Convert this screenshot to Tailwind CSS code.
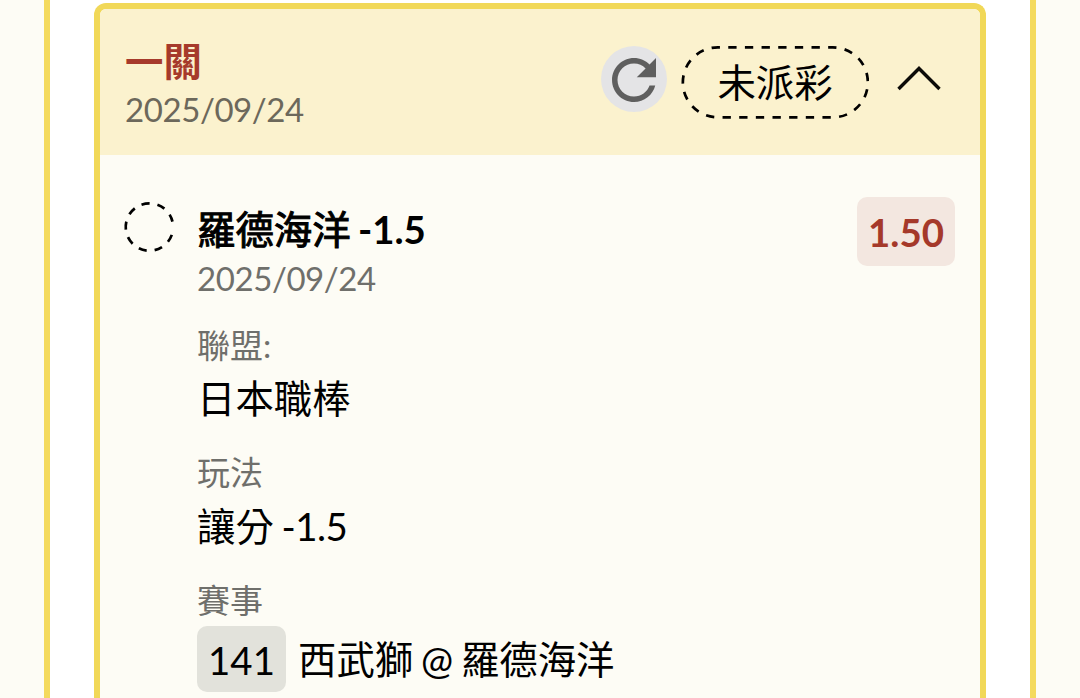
<!DOCTYPE html>
<html lang="zh-TW">
<head>
  <meta charset="UTF-8">
  <meta name="viewport" content="width=device-width, initial-scale=1.0">
  <script src="https://cdn.jsdelivr.net/npm/@tailwindcss/browser@4"></script>
  <title>投注紀錄</title>
</head>
<body class="h-[698px] overflow-hidden bg-[#fdfcf5] font-[Lato,'Noto_Sans_CJK_TC',sans-serif] text-black">
  <div class="ml-[44px] h-[698px] w-[992px] border-x-6 border-[#f4da5e] bg-white px-[44px] pt-[3px]">
    <div class="h-[695px] rounded-t-xl border-6 border-b-0 border-[#f1d858] bg-[#fdfcf5]">

      <header class="flex h-[146px] justify-between rounded-t-md bg-[#fbf2ce] pr-[38px] pl-[25px]">
        <div class="pt-[28px]">
          <h1 class="h-[48px] text-[38.4px] leading-[48px] font-bold text-[#a63a2b]">一關</h1>
          <p class="h-[48px] text-[33px] leading-[48px] tracking-[-0.42px] text-[#6c685b]">2025/09/24</p>
        </div>
        <div class="flex items-start pt-[37px]">
          <button class="size-[66px] rounded-full bg-[#e4e4e6]">
            <svg class="mt-px size-[66px]" viewBox="0 0 24 24" fill="#5f5f5f">
              <path d="M17.65 6.35C16.2 4.9 14.21 4 12 4c-4.42 0-7.99 3.58-7.99 8s3.57 8 7.99 8c3.73 0 6.84-2.55 7.73-6h-2.08c-.82 2.33-3.04 4-5.65 4-3.31 0-6-2.69-6-6s2.69-6 6-6c1.66 0 3.14.69 4.22 1.78L13 11h7V4l-2.35 2.35z"/>
            </svg>
          </button>
          <div class="relative ml-[14px] h-[73px] w-[188px] text-center text-[38.4px] leading-[73px]">
            <svg class="absolute inset-0" width="188" height="73" viewBox="0 0 188 73" fill="none" stroke="#000" stroke-width="2.7">
              <rect x="1.85" y="1.35" width="185" height="70" rx="35" pathLength="54" stroke-dasharray="1 1" stroke-dashoffset="0.75"/>
            </svg>
            未派彩
          </div>
          <svg class="mt-[18px] ml-[27px]" width="46" height="28" viewBox="0 0 46 28" fill="none" stroke="#0c0b08" stroke-width="3.4">
            <path d="M2.5 25 23 4.5 43.5 25"/>
          </svg>
        </div>
      </header>

      <section class="flex items-start pt-[41px] pr-[25px] pl-[23px]">
        <svg class="mt-[5px] shrink-0" width="52" height="52" viewBox="0 0 52 52" fill="none" stroke="#000" stroke-width="2.7">
          <path d="M48.77 33.83A23.7 23.7 0 1 1 49.49 20.67" stroke-dasharray="8 7.93"/>
        </svg>
        <div class="ml-[22px] grow [word-spacing:-2px]">
          <h2 class="h-[58px] text-[38.4px] leading-[66px] font-bold"><span class="font-normal [-webkit-text-stroke:1px_#000]">羅德海洋</span> -1.5</h2>
          <p class="h-[48px] text-[33px] leading-[48px] tracking-[-0.42px] text-[#6f6f6b]">2025/09/24</p>
          <dl>
            <dt class="mt-[19px] h-[48px] text-[33px] leading-[48px] text-[#6f6f6b]">聯盟:</dt>
            <dd class="h-[60px] text-[38.4px] leading-[58px]">日本職棒</dd>
            <dt class="mt-[19px] h-[48px] text-[33px] leading-[48px] text-[#6f6f6b]">玩法</dt>
            <dd class="h-[60px] text-[38.4px] leading-[60px]">讓分 <span class="tracking-[-0.6px]">-1.5</span></dd>
            <dt class="mt-[20px] h-[48px] text-[33px] leading-[48px] text-[#6f6f6b]">賽事</dt>
            <dd class="mt-[2px] flex items-center text-[38.4px] leading-[66px]">
              <span class="mr-[12px] h-[66px] w-[89px] rounded-[10px] bg-[#e2e2db] text-center leading-[68px]">141</span>
              西武獅 @ 羅德海洋
            </dd>
          </dl>
        </div>
        <span class="mt-px h-[69px] w-[98px] rounded-[10px] bg-[#f3e7e0] text-center text-[38.4px] leading-[70px] font-bold text-[#a5392a]">1.50</span>
      </section>

    </div>
  </div>
</body>
</html>
